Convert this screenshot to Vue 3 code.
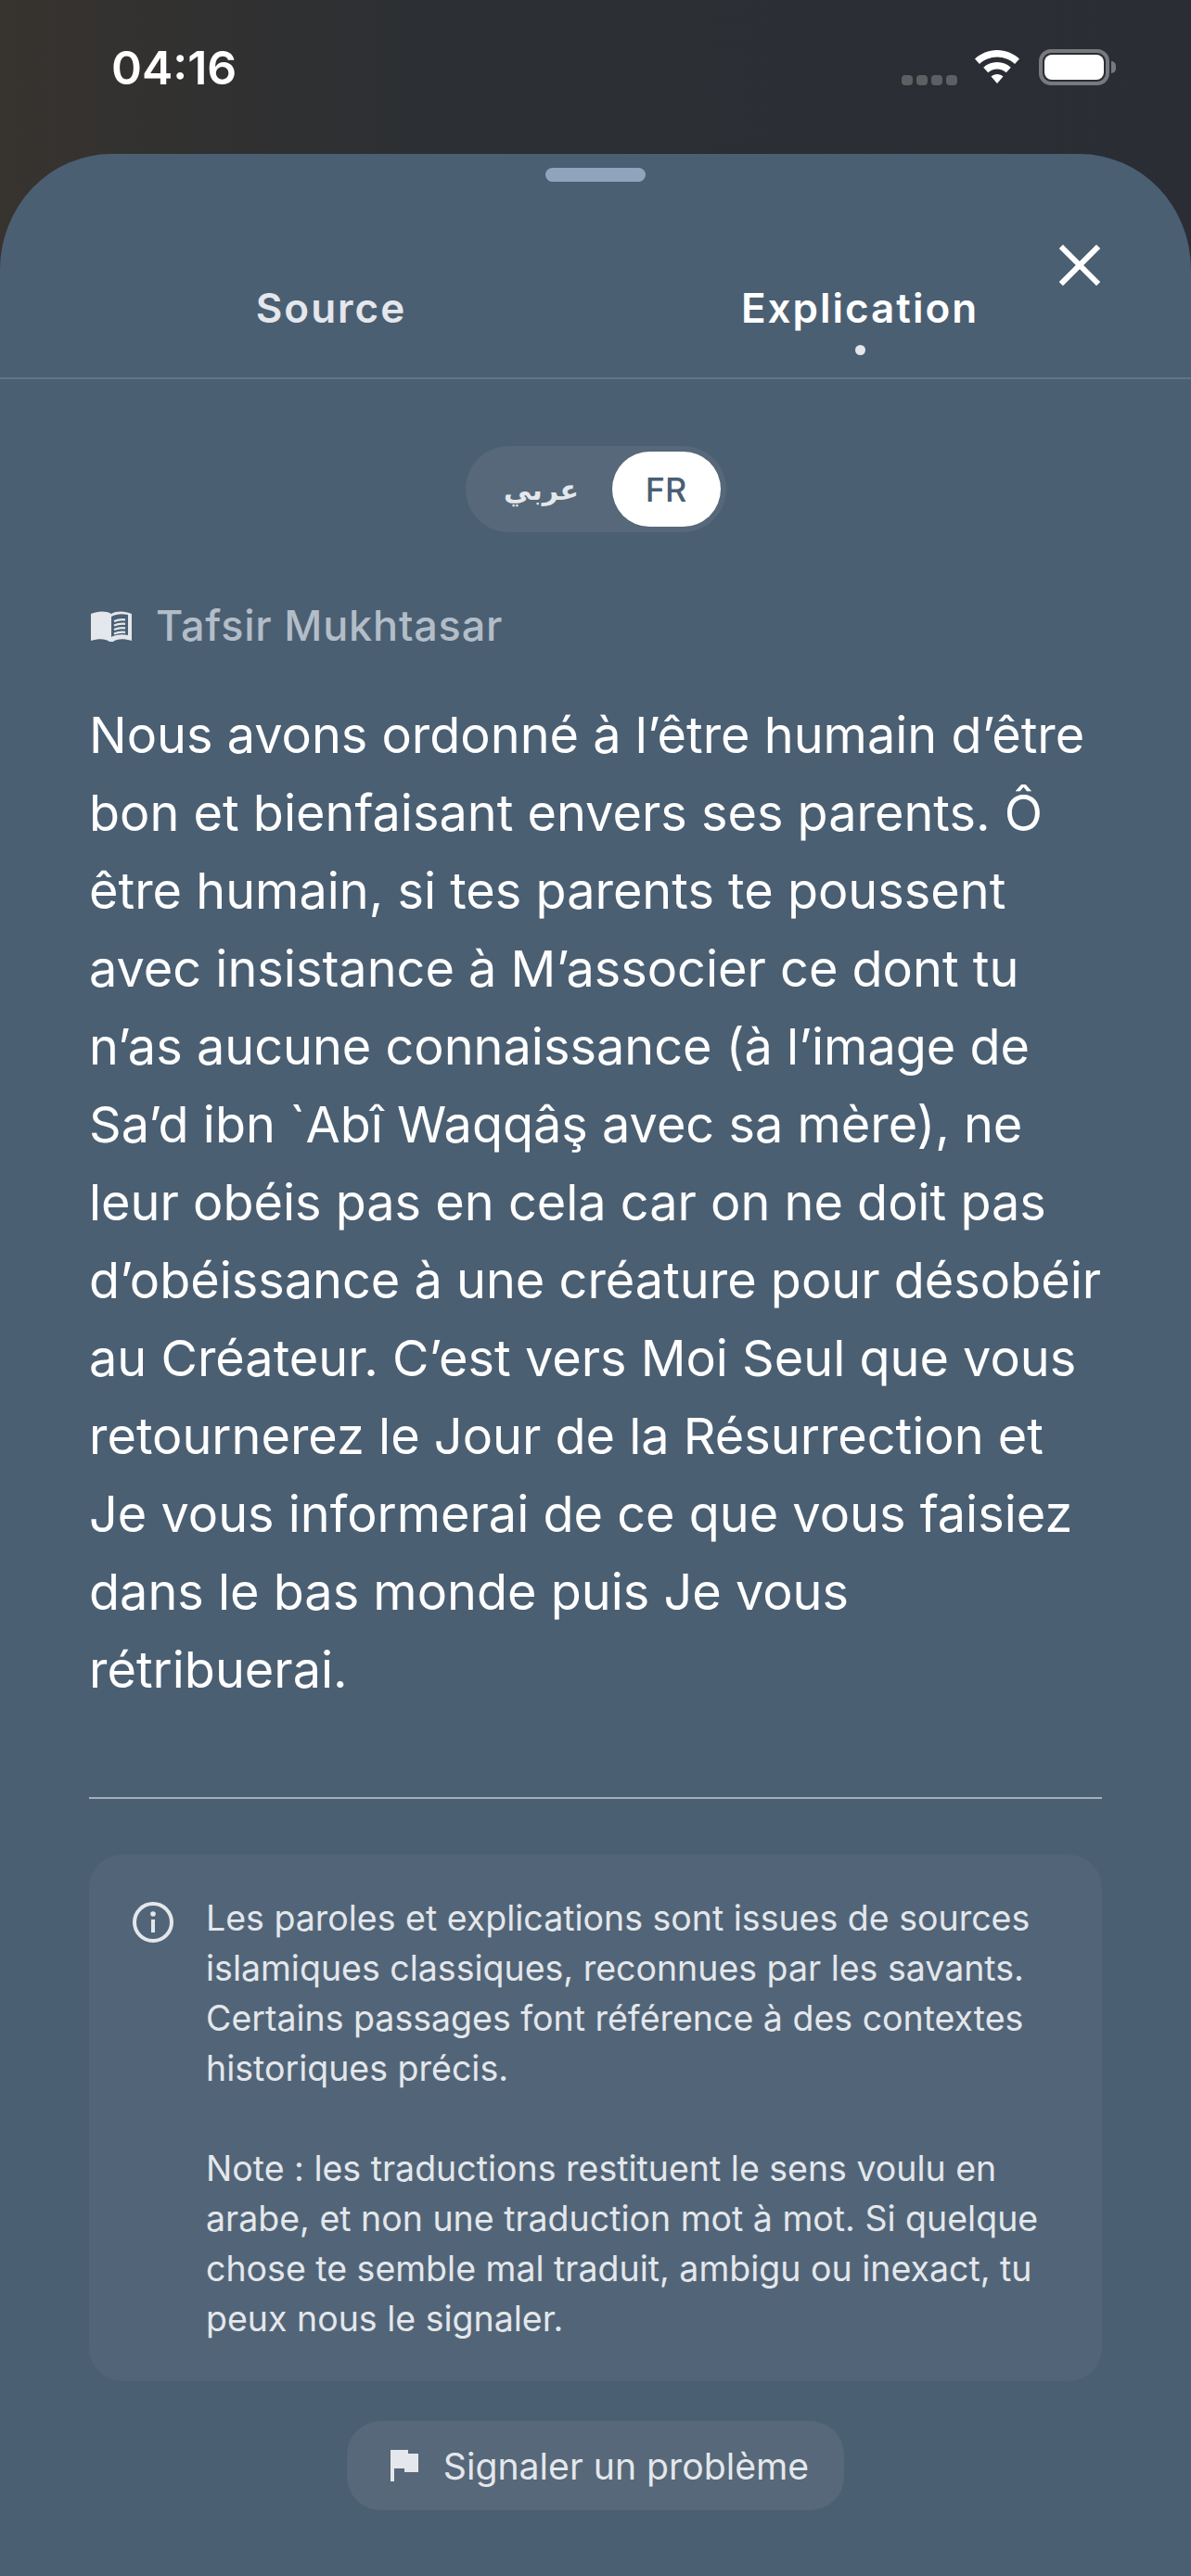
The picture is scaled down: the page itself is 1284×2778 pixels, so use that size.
<template>
  <div class="screen">
    <div class="status-bar">
      <span class="time">04:16</span>
      <div class="status-icons">
        <div class="signal"><i></i><i></i><i></i><i></i></div>
        <svg class="wifi" viewBox="0 0 50 36" aria-hidden="true">
          <path d="M25 0C15.800 0 7.400 3.600 1 9.400l5 5.600C11 10.400 17.700 7.600 25 7.600S39 10.400 44 15l5-5.600C42.600 3.600 34.200 0 25 0z" fill="#fff"/>
          <path d="M25 13c-5.700 0-10.900 2.200-14.800 5.800l5 5.500C17.800 21.900 21.200 20.500 25 20.500s7.200 1.400 9.800 3.800l5-5.500C35.900 15.200 30.700 13 25 13z" fill="#fff"/>
          <path d="M25 26c-2.500 0-4.800 1-6.500 2.500L25 36l6.500-7.500C29.800 27 27.500 26 25 26z" fill="#fff"/>
        </svg>
        <div class="battery"><div class="battery-fill"></div></div>
      </div>
    </div>

    <section class="sheet">
      <div class="handle"></div>
      <button class="close" aria-label="Fermer">
        <svg viewBox="0 0 44 44" aria-hidden="true">
          <path d="M4 4l36 36M40 4L4 40" stroke="#fff" stroke-width="6" stroke-linecap="square" fill="none"/>
        </svg>
      </button>

      <nav class="tabs">
        <div v-for="tab in tabs" :key="tab.label" class="tab" :class="{ active: tab.active }">
          {{ tab.label }}
          <span v-if="tab.active" class="tab-dot"></span>
        </div>
      </nav>

      <div class="content">
        <div class="lang-toggle">
          <span class="lang lang-ar">عربي</span>
          <span class="lang lang-fr">FR</span>
        </div>

        <div class="source-label">
          <svg class="book" viewBox="0 0 44 33" aria-hidden="true">
            <path d="M0 3C7 0 16 -0.500 22 3C28 -0.500 37 0 44 3V32C36 29.500 28 29.500 24 33H20C16 29.500 8 29.500 0 32Z" fill="#e4e7eb"/>
            <path d="M22 6C27 3 34 2.500 40 4V26C34 24.500 27 25 22 28Z" fill="#4b5f73"/>
            <path d="M25 11C29 9.200 33 8.800 37 9.300M25 15.500C29 13.700 33 13.300 37 13.800M25 20C29 18.200 33 17.800 37 18.300M25 24.500C29 22.700 33 22.300 37 22.800" stroke="#e4e7eb" stroke-width="2.200" fill="none"/>
          </svg>
          <span>Tafsir Mukhtasar</span>
        </div>

        <p class="body-text">Nous avons ordonné à l’être humain d’être bon et bienfaisant envers ses parents. Ô être humain, si tes parents te poussent avec insistance à M’associer ce dont tu n’as aucune connaissance (à l’image de Sa’d ibn `Abî Waqqâş avec sa mère), ne leur obéis pas en cela car on ne doit pas d’obéissance à une créature pour désobéir au Créateur. C’est vers Moi Seul que vous retournerez le Jour de la Résurrection et Je vous informerai de ce que vous faisiez dans le bas monde puis Je vous rétribuerai.</p>

        <hr class="rule" />

        <div class="notice">
          <svg class="info" viewBox="0 0 44 44" aria-hidden="true">
            <circle cx="22" cy="22" r="20" stroke="#e4e7eb" stroke-width="4" fill="none"/>
            <circle cx="22" cy="13" r="2.800" fill="#e4e7eb"/>
            <rect x="20" y="19" width="4" height="14" fill="#e4e7eb"/>
          </svg>
          <div class="notice-text">
            <p>Les paroles et explications sont issues de sources islamiques classiques, reconnues par les savants. Certains passages font référence à des contextes historiques précis.</p>
            <p>Note : les traductions restituent le sens voulu en arabe, et non une traduction mot à mot. Si quelque chose te semble mal traduit, ambigu ou inexact, tu peux nous le signaler.</p>
          </div>
        </div>

        <button class="report">
          <svg class="flag" viewBox="0 0 30 34" aria-hidden="true">
            <path d="M0 0H19V4H30V24H15V20H4V34H0Z" fill="#e4e7eb"/>
          </svg>
          Signaler un problème
        </button>
      </div>
    </section>
  </div>
</template>

<script setup>
const tabs = [
  { label: 'Source', active: false },
  { label: 'Explication', active: true },
]
</script>

<style>
body { background: #2c2f34; }
</style>

<style scoped>
* { box-sizing: border-box; margin: 0; padding: 0; }

.screen {
  width: 1284px;
  height: 2778px;
  overflow: hidden;
  display: flex;
  flex-direction: column;
  font-family: Inter, "DejaVu Sans", sans-serif;
  background: linear-gradient(90deg, #37332f 0%, #2c2f33 35%, #2a2d34 100%);
}

.status-bar {
  height: 166px;
  flex-shrink: 0;
  display: flex;
  justify-content: space-between;
  padding: 43px 82px 0 120px;
}

.time { font-size: 50px; font-weight: 600; line-height: 60px; color: #fff; }

.status-icons { display: flex; align-items: flex-start; margin-top: 10px; }

.signal { display: flex; gap: 4px; margin-top: 28px; margin-right: 18px; }
.signal i { width: 12px; height: 11px; border-radius: 4px; background: #5c6063; display: block; }

.wifi { width: 50px; height: 36px; margin-right: 20px; margin-top: 1px; }

.battery {
  position: relative;
  width: 76px;
  height: 39px;
  margin-right: 6px;
  border: 4px solid #77797d;
  border-radius: 13px;
  padding: 2px;
}
.battery::after {
  content: "";
  position: absolute;
  right: -11px;
  top: 9px;
  width: 5px;
  height: 13px;
  border-radius: 0 6px 6px 0;
  background: #77797d;
}
.battery-fill { width: 100%; height: 100%; background: #fff; border-radius: 8px; }

.sheet {
  position: relative;
  flex: 1;
  background: #4b5f73;
  border-radius: 120px 120px 0 0 / 125px 125px 0 0;
}

.handle {
  width: 108px;
  height: 15px;
  margin: 15px auto 0;
  border-radius: 8px;
  background: #8fa5bd;
}

.close {
  position: absolute;
  top: 98px;
  left: 1142px;
  width: 44px;
  height: 44px;
  background: none;
  border: none;
}
.close svg { display: block; width: 44px; height: 44px; }

.tabs {
  display: flex;
  justify-content: center;
  height: 213px;
  padding-top: 109px;
  border-bottom: 2px solid #62748a;
}

.tab {
  position: relative;
  width: 570px;
  height: 54px;
  text-align: center;
  font-size: 44px;
  line-height: 54px;
  font-weight: 600;
  letter-spacing: 2px;
  color: #e4e7eb;
}
.tab.active { color: #fff; }

.tab-dot {
  position: absolute;
  left: 50%;
  top: 67px;
  width: 11px;
  height: 11px;
  margin-left: -5px;
  border-radius: 50%;
  background: #e4e7eb;
}

.content { padding: 0 96px; display: flex; flex-direction: column; }

.lang-toggle {
  align-self: center;
  display: flex;
  align-items: center;
  width: 281px;
  height: 93px;
  margin-top: 72px;
  padding: 6px;
  border-radius: 47px;
  background: #566879;
}

.lang { display: flex; align-items: center; justify-content: center; height: 81px; border-radius: 41px; }
.lang-ar { flex: 1; font-size: 30px; font-weight: 600; color: #e4e7eb; }
.lang-fr { width: 117px; background: #fff; color: #4b5f73; font-size: 36px; font-weight: 500; }

.source-label {
  display: flex;
  align-items: center;
  gap: 28px;
  margin-top: 74px;
  font-size: 45px;
  line-height: 54px;
  font-weight: 500;
  letter-spacing: 0.8px;
  color: #b3bdc7;
}
.book { width: 44px; height: 33px; flex-shrink: 0; margin-left: 2px; margin-right: -2px; }

.body-text {
  margin-top: 49px;
  font-size: 54px;
  line-height: 84px;
  color: #fff;
}

.rule { margin-top: 95px; border: none; border-top: 2px solid #a5afb9; }

.notice {
  display: flex;
  gap: 35px;
  margin-top: 60px;
  padding: 42px 47px 40px;
  border-radius: 36px;
  background: #526578;
}
.info { width: 44px; height: 44px; flex-shrink: 0; margin-top: 9px; }

.notice-text { font-size: 37.500px; line-height: 54px; color: #e4e7eb; }
.notice-text p + p { margin-top: 54px; }

.report {
  align-self: center;
  display: flex;
  align-items: center;
  gap: 27px;
  height: 96px;
  margin-top: 43px;
  padding: 0 38px 0 47px;
  border: none;
  border-radius: 36px;
  background: #566879;
  font-family: inherit;
  font-size: 39.200px;
  color: #e4e7eb;
}
.flag { width: 30px; height: 34px; flex-shrink: 0; }
</style>
